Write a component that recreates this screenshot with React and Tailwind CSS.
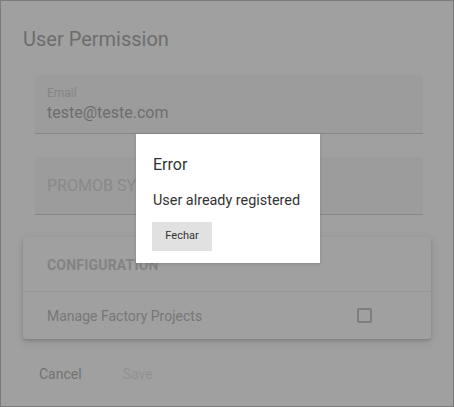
export default function App() {
  return (
    <div className="relative w-[454px] h-[407px] border border-[#7b7b7b] bg-[#a0a0a0] overflow-hidden" style={{ fontFamily: 'Roboto, "Liberation Sans", sans-serif' }}>
      <div className="flex flex-col">
        <div className="pl-[22px] pt-[27px] text-[20px] leading-[23px] text-[#6d6d6d]">User Permission</div>

        <div className="ml-[34px] mt-[24px] w-[388px] bg-[#9c9c9c] border-b border-[#868686] pl-[12px] pt-[11px] pb-[11px] rounded-t-[4px]">
          <div className="text-[12px] leading-[14px] text-[#858585]">Email</div>
          <div className="mt-[3px] text-[16px] leading-[19px] text-[#6d6d6d]">teste@teste.com</div>
        </div>

        <div className="ml-[34px] mt-[23px] w-[388px] bg-[#9c9c9c] border-b border-[#868686] pl-[12px] pt-[19px] pb-[19px] rounded-t-[4px]">
          <div className="text-[16px] leading-[19px] text-[#898989]">PROMOB SYSTEM</div>
        </div>

        <div className="ml-[22px] mt-[22px] w-[408px] bg-[#a0a0a0] rounded-[3px] shadow-[0_2px_3px_rgba(0,0,0,0.12),0_3px_10px_rgba(0,0,0,0.1)]">
          <div className="pl-[24px] pt-[20px] pb-[18px] text-[14px] leading-[16px] font-bold text-[#838383] tracking-[0.2px] border-b border-[#969696]">CONFIGURATION</div>
          <div className="h-[47px] flex items-center justify-between pl-[24px] pr-[59px]">
            <span className="text-[14px] leading-[16px] text-[#777777]">Manage Factory Projects</span>
            <span className="w-[15px] h-[15px] border-2 border-[#7d7d7d] rounded-[2px]" />
          </div>
        </div>

        <div className="flex mt-[27px] pl-[38px] text-[14px] leading-[16px]">
          <span className="text-[#727272]">Cancel</span>
          <span className="ml-[41px] text-[#929292]">Save</span>
        </div>
      </div>

      <div className="absolute left-[135px] top-[133px] w-[184px] h-[129px] bg-white pl-[17px] pt-[21px] flex flex-col items-start shadow-[0_1px_3px_rgba(0,0,0,0.15)]">
        <div className="text-[16px] leading-[19px] text-[#333333]">Error</div>
        <div className="mt-[19px] text-[14.4px] leading-[16px] text-[#333333]">User already registered</div>
        <div className="mt-[13px] -ml-[1px] w-[60px] h-[29px] bg-[#e1e1e1] flex items-center justify-center text-[11px] text-[#333333]">Fechar</div>
      </div>
    </div>
  );
}
